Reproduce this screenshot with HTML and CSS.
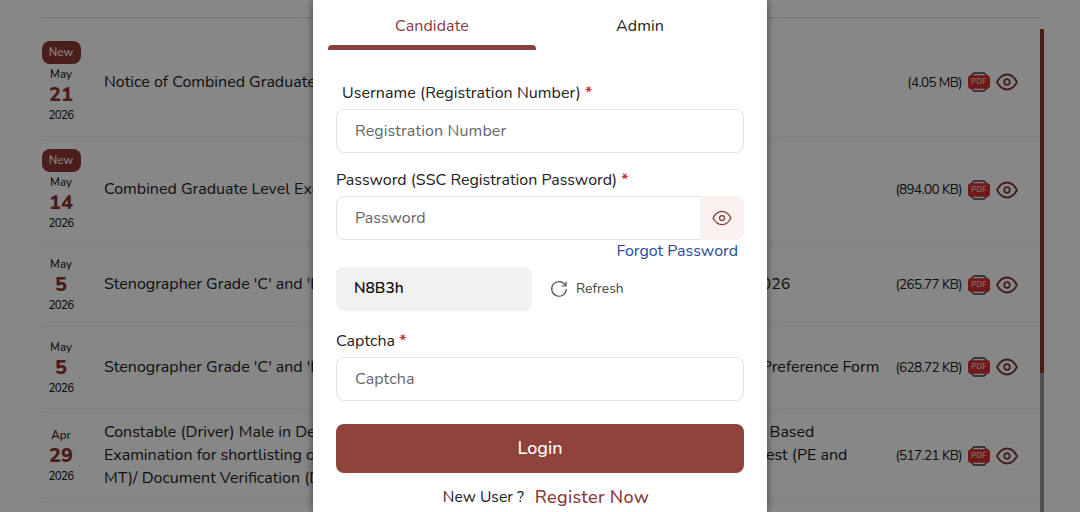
FILE: index.html
```html
<!DOCTYPE html>
<html lang="en">
<head>
  <meta charset="UTF-8" />
  <title>Login</title>
  <link rel="stylesheet" href="styles.css">
</head>
<body>
  <svg class="symbols" width="0" height="0">
    <symbol id="eye" viewBox="0 0 22 18">
      <path d="M1 9C3.600 4 7 1.500 11 1.500S18.400 4 21 9C18.400 14 15 16.500 11 16.500S3.600 14 1 9Z" />
      <circle cx="11" cy="9" r="2.800" />
    </symbol>
    <symbol id="pdf" viewBox="0 0 22 20">
      <path d="M3.500 5V3.500L6 1H16L18.500 3.500V5M3.500 15V16.500L6 19H16L18.500 16.500V15" fill="none" stroke="#4a3838" stroke-width="1.600" />
      <rect x="0" y="3" width="22" height="14" rx="3.500" fill="#d0312f" />
      <path d="M5 2.800H17M5 17.200H17" stroke="#eee" stroke-width="0.800" />
      <text x="11" y="12.400" text-anchor="middle" font-size="7.500" letter-spacing="0.300" fill="#fff">PDF</text>
    </symbol>
  </svg>

  <div class="notices">
    <div class="notice-list">
      <div class="notice">
        <div class="date"><span class="badge">New</span><span>May</span><b>21</b><span class="year">2026</span></div>
        <div class="title"><p>Notice of Combined Graduate</p></div>
        <div class="file"><span>(4.05 MB)</span><svg class="pdf"><use href="#pdf" /></svg><svg class="eye"><use href="#eye" /></svg></div>
      </div>
      <div class="notice">
        <div class="date"><span class="badge">New</span><span>May</span><b>14</b><span class="year">2026</span></div>
        <div class="title"><p>Combined Graduate Level Exam</p></div>
        <div class="file"><span>(894.00 KB)</span><svg class="pdf"><use href="#pdf" /></svg><svg class="eye"><use href="#eye" /></svg></div>
      </div>
      <div class="notice">
        <div class="date"><span>May</span><b>5</b><span class="year">2026</span></div>
        <div class="title w-year"><p><span>Stenographer Grade 'C' and 'D'</span><span>2026</span></p></div>
        <div class="file"><span>(265.77 KB)</span><svg class="pdf"><use href="#pdf" /></svg><svg class="eye"><use href="#eye" /></svg></div>
      </div>
      <div class="notice">
        <div class="date"><span>May</span><b>5</b><span class="year">2026</span></div>
        <div class="title"><p><span>Stenographer Grade 'C' and 'D'</span><span>Preference Form</span></p></div>
        <div class="file"><span>(628.72 KB)</span><svg class="pdf"><use href="#pdf" /></svg><svg class="eye"><use href="#eye" /></svg></div>
      </div>
      <div class="notice tall">
        <div class="date"><span>Apr</span><b>29</b><span class="year">2026</span></div>
        <div class="title">
          <p class="w-based"><span>Constable (Driver) Male in Delhi</span><span>Based</span></p>
          <p class="w-test"><span>Examination for shortlisting of</span><span>Test (PE and</span></p>
          <p><span>MT)/ Document Verification (DV)</span></p>
        </div>
        <div class="file"><span>(517.21 KB)</span><svg class="pdf"><use href="#pdf" /></svg><svg class="eye"><use href="#eye" /></svg></div>
      </div>
    </div>
    <div class="scrollbar"><div class="thumb"></div></div>
  </div>

  <div class="overlay">
    <form class="modal">
      <div class="tabs">
        <div class="tab active">Candidate</div>
        <div class="tab">Admin</div>
      </div>

      <label class="label username">Username (Registration Number) <i>*</i></label>
      <input type="text" placeholder="Registration Number" />

      <label class="label pass-label">Password (SSC Registration Password) <i>*</i></label>
      <div class="password">
        <input type="password" placeholder="Password" />
        <span class="toggle"><svg class="eye"><use href="#eye" /></svg></span>
      </div>
      <a class="forgot">Forgot Password</a>

      <div class="captcha">
        <div class="code">N8B3h</div>
        <svg class="refresh-icon" viewBox="0 0 18 18"><path d="M15.300 5.200A7.300 7.300 0 1 0 16.300 9M16 1.500V6H11.500" /></svg>
        <span class="refresh">Refresh</span>
      </div>

      <label class="label">Captcha <i>*</i></label>
      <input type="text" placeholder="Captcha" />

      <button type="button" class="login">Login</button>
      <div class="signup"><span>New User ?</span><a>Register Now</a></div>
    </form>
  </div>
</body>
</html>
```
FILE: styles.css
```css
* {
  box-sizing: border-box;
}
body {
  margin: 0;
  height: 512px;
  overflow: hidden;
  background: #fff;
  font-family: "Nunito", "Noto Sans", sans-serif;
  font-size: 16px;
  color: #212121;
}
p {
  margin: 0;
}
.symbols {
  display: none;
}

/* notice board */
.notices {
  display: flex;
  width: 1003px;
  height: 512px;
  margin-left: 41px;
  padding-top: 17px;
}
.notice-list {
  flex: 1;
  border-top: 1px solid #dadada;
  padding-top: 11px;
}
.notice {
  display: flex;
  align-items: center;
  padding: 10px 22px 10.5px 0;
  border-bottom: 1px solid #f0f0f0;
}
.notice.tall {
  padding-top: 12px;
  padding-bottom: 11px;
}
.date {
  width: 40px;
  display: flex;
  flex-direction: column;
  align-items: center;
  font-size: 11.5px;
  font-weight: 500;
  line-height: 20px;
}
.date b {
  font-size: 20px;
  font-weight: 800;
  line-height: 21px;
  color: #8f3434;
}
.year {
  letter-spacing: -0.6px;
}
.badge {
  width: 39px;
  height: 23px;
  margin: 2px 0 0;
  border-radius: 8px;
  background: #8f3735;
  color: #fff;
  line-height: 22px;
  text-align: center;
}
.title {
  flex: 1;
  margin-left: 23px;
  margin-right: 16px;
  line-height: 23px;
  white-space: nowrap;
}
.title p {
  display: flex;
  justify-content: space-between;
}
.w-year {
  padding-right: 89px;
}
.w-based {
  padding-right: 65px;
}
.w-test {
  padding-right: 32px;
}
.file {
  display: flex;
  align-items: center;
  gap: 6px;
  font-size: 13.5px;
}
.file span {
  letter-spacing: -0.6px;
}
.eye {
  width: 22px;
  height: 18px;
  fill: none;
  stroke: #7d3a35;
  stroke-width: 1.8;
}
.pdf {
  width: 22px;
  height: 20px;
}
.scrollbar {
  width: 4px;
  height: 483px;
  margin-top: 12px;
  background: #999;
}
.thumb {
  height: 344px;
  background: #87382b;
}

/* login dialog */
.overlay {
  position: absolute;
  inset: 0;
  background: rgba(0, 0, 0, 0.47);
  display: flex;
  justify-content: center;
}
.modal {
  width: 454px;
  height: 512px;
  padding: 0 23px;
  background: #fff;
  box-shadow: 0 0 8px rgba(0, 0, 0, 0.5);
}
.tabs {
  display: flex;
  width: 416px;
  margin: 0 -8px 31px;
}
.tab {
  flex: 1;
  height: 50px;
  text-align: center;
  line-height: 52px;
  letter-spacing: 0.1px;
}
.tab.active {
  color: #8b3a3a;
}
.tab.active::after {
  content: "";
  display: block;
  height: 5px;
  margin-top: -7px;
  border-radius: 4px 4px 0 0;
  background: #87403f;
}
.label {
  display: block;
  height: 28px;
  line-height: 24px;
  letter-spacing: 0.06px;
}
.label i {
  color: #d32f2f;
  font-style: normal;
  font-weight: 700;
}
.username {
  padding-left: 6px;
}
.pass-label {
  letter-spacing: 0;
}
input {
  display: block;
  width: 408px;
  height: 44px;
  margin-bottom: 15px;
  padding: 0 18px 1px;
  border: 1px solid #e2e2e2;
  border-radius: 8px;
  background: #fff;
  font: inherit;
  letter-spacing: 0.12px;
}
input::placeholder {
  color: #666;
}
.password {
  display: flex;
}
.password input {
  width: 364px;
  margin: 0;
  border-right: 0;
  border-radius: 8px 0 0 8px;
  letter-spacing: 0;
}
.toggle {
  width: 44px;
  height: 44px;
  display: flex;
  align-items: center;
  justify-content: center;
  border-radius: 0 8px 8px 0;
  background: #fdf1ef;
}
.toggle .eye {
  width: 20px;
  height: 16px;
  stroke-width: 1.4;
}
.forgot {
  display: block;
  height: 27px;
  padding-right: 6px;
  text-align: right;
  line-height: 22px;
  color: #2a4b9b;
}
.captcha {
  display: flex;
  align-items: center;
  height: 43px;
  margin-bottom: 19px;
}
.code {
  width: 196px;
  height: 44px;
  padding-left: 18px;
  border-radius: 8px;
  background: #f1f1f0;
  color: #111;
  font-weight: 600;
  font-size: 15.5px;
  line-height: 42px;
}
.refresh-icon {
  width: 18px;
  height: 18px;
  margin: 0 8px 0 18px;
  fill: none;
  stroke: #555;
  stroke-width: 1.2;
}
.refresh {
  font-size: 13.8px;
  color: #444;
}
.login {
  display: block;
  width: 408px;
  height: 49px;
  margin-top: 23px;
  padding-bottom: 3px;
  border: 0;
  border-radius: 8px;
  background: #8f433c;
  color: #fff;
  font: 500 18px "Nunito", "Noto Sans", sans-serif;
}
.signup {
  display: flex;
  justify-content: center;
  align-items: center;
  gap: 11px;
  height: 47px;
  padding-left: 12px;
  font-size: 15.7px;
}
.signup a {
  font-size: 18px;
  font-weight: 500;
  letter-spacing: 0.3px;
  color: #8b3a3a;
}
```
